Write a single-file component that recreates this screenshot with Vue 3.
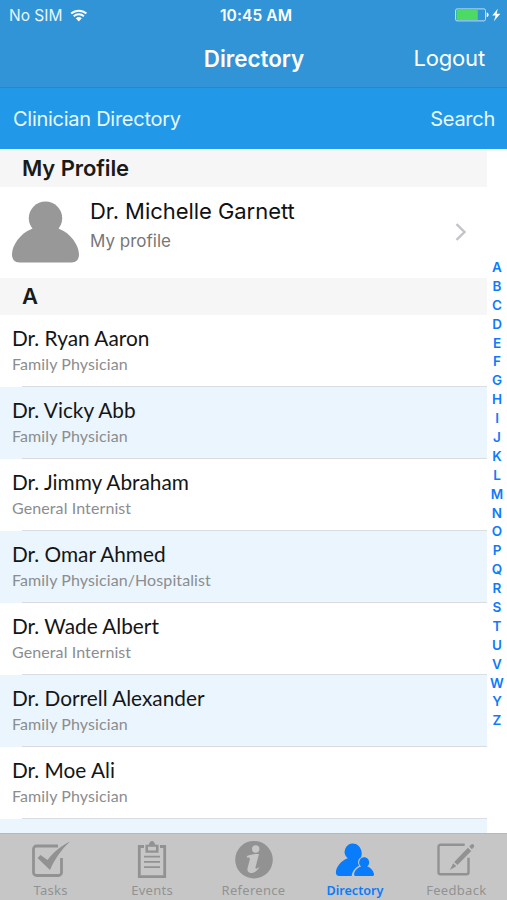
<template>
  <div class="phone">
    <header class="nav">
      <div class="status">
        <div class="carrier">
          <span>No SIM</span>
          <svg class="wifi" viewBox="0 0 18 13" width="18" height="13">
            <path d="M1.2 4.6a11.2 11.2 0 0 1 15.2 0" />
            <path d="M3.7 7.3a7.6 7.6 0 0 1 10.2 0" />
            <path class="solid" d="M8.8 12.4L5.8 9.3a4.4 4.4 0 0 1 6 0z" />
          </svg>
        </div>
        <span class="time">10:45 AM</span>
        <div class="battery">
          <svg viewBox="0 0 46 14" width="46" height="14">
            <rect class="shell" x="0.5" y="0.9" width="30" height="12" rx="1.6" />
            <rect class="charge" x="1.5" y="1.9" width="21.3" height="10" rx="0.5" />
            <path class="white" d="M31.7 4.6c2.6.6 2.6 4 0 4.6z" />
            <path class="white" d="M42.800 0.800L37.300 7.500h3.300L38.900 13.200l6.400-7.400h-3.700z" />
          </svg>
        </div>
      </div>
      <div class="title-row">
        <h1>Directory</h1>
        <a class="logout">Logout</a>
      </div>
    </header>

    <div class="sub-bar">
      <span class="sub-title">Clinician Directory</span>
      <span class="search">Search</span>
    </div>

    <main class="content">
      <div class="list">
        <h2 class="section">My Profile</h2>
        <div class="profile">
          <svg class="avatar" viewBox="0 0 67 62" width="67" height="62">
            <circle cx="33.5" cy="17.200" r="16.700" />
            <path
              d="M22 24c0 2-.5 3.200-2.500 4C8 32.500 0 44.500 0 53.500c0 5 2.800 8 7.500 8h52c4.700 0 7.500-3 7.500-8 0-9-8-21-19.500-25.500-2-.8-2.500-2-2.500-4z"
            />
          </svg>
          <div class="profile-text">
            <div class="profile-name">Dr. Michelle Garnett</div>
            <div class="profile-sub">My profile</div>
          </div>
          <svg class="chevron" viewBox="0 0 12 18" width="12" height="18">
            <path d="M1.500 1.200L9.500 9l-8 7.800" />
          </svg>
        </div>
        <h2 class="section letter">A</h2>
        <div v-for="doc in doctors" :key="doc.name" class="row">
          <div class="name">{{ doc.name }}</div>
          <div class="role">{{ doc.role }}</div>
        </div>
        <div class="row"></div>
      </div>
      <nav class="index">
        <span v-for="l in letters" :key="l">{{ l }}</span>
      </nav>
    </main>

    <footer class="tabs">
      <div v-for="tab in tabs" :key="tab.id" class="tab" :class="{ active: tab.id === current }">
        <svg viewBox="0 0 42 42" width="42" height="42">
          <g v-if="tab.id === 'tasks'">
            <path class="line" d="M28 6H6.500a3 3 0 0 0-3 3V32.500a3 3 0 0 0 3 3h22a3 3 0 0 0 3-3V18" />
            <path d="M7.500 18l3-3 7 5C24 12 30.500 6 40 1.500c-8 7.500-15.500 17.500-20 28.500z" />
          </g>
          <g v-else-if="tab.id === 'events'">
            <path class="line" d="M13 6.500H8.300v30.200h25.400V6.500H29" />
            <path fill-rule="evenodd" d="M14.500 4.700h3.200C18.500 2.500 19.500 1 21 1s2.500 1.500 3.300 3.700h3.200v8h-13zM17 6.700v3.700h8V6.700z" />
            <path class="thin" d="M13 16.700h16M13 21.900h16M13 27.200h16" />
          </g>
          <g v-else-if="tab.id === 'reference'">
            <circle cx="21" cy="19.700" r="18.800" />
            <circle class="hole" cx="22.700" cy="9" r="3.700" />
            <path class="hole" d="M14 16c3-1.500 7.700-2.300 12-2L22.500 27.200c-.5 2 1 2 4-.4-2 4.200-5.500 6.500-8.900 6.200-3-.3-3.600-2.500-3-5l2.200-8.500c.4-1.900-.8-2.200-3.100-2z" />
          </g>
          <g v-else-if="tab.id === 'directory'" transform="translate(-0.8 0)">
            <path d="M19.700 3.500a8.300 8.300 0 0 0-5.200 14.700C8 20.500 2.700 27 2.700 32.500c0 2.200 1.200 3.500 3.200 3.500h12.600c.5-4.500 3.300-8.300 7.400-10.200-2.300-4.500.1-7.300 1.600-8.200.9-1.500 1.400-3.500.7-6.500-.9-4.200-4.300-7.600-8.500-7.600z" />
            <path d="M31 17.300a5.100 5.100 0 0 0-3.100 9.100c-4.200 1.300-6.700 4.800-7 7.800-.1 1.200.5 1.800 1.700 1.800h16.500c1.200 0 1.800-.6 1.700-1.800-.3-3-2.800-6.500-6.800-7.800A5.100 5.100 0 0 0 31 17.300z" />
          </g>
          <g v-else transform="translate(-1.300 0.200)">
            <path class="line frame" d="M31 4.500H6.800A2 2 0 0 0 4.800 6.500V32a2 2 0 0 0 2 2h26a2 2 0 0 0 2-2V17.500" />
            <path d="M20.500 21.700L34.200 7.600l3.300 3.200-13.700 14.100zM19.500 23.100l3.100 3-6.400 3.700zM35.500 6.300l2.100-2.100q1.200-.8 2.400.3.900 1.100.2 2.400l-2 2.200z" />
          </g>
        </svg>
        <span>{{ tab.label }}</span>
      </div>
    </footer>
  </div>
</template>

<script setup>
import { ref } from "vue";

const current = ref("directory");

const doctors = [
  { name: "Dr. Ryan Aaron", role: "Family Physician" },
  { name: "Dr. Vicky Abb", role: "Family Physician" },
  { name: "Dr. Jimmy Abraham", role: "General Internist" },
  { name: "Dr. Omar Ahmed", role: "Family Physician/Hospitalist" },
  { name: "Dr. Wade Albert", role: "General Internist" },
  { name: "Dr. Dorrell Alexander", role: "Family Physician" },
  { name: "Dr. Moe Ali", role: "Family Physician" },
];

// no entries under X
const letters = "ABCDEFGHIJKLMNOPQRSTUVWYZ".split("");

const tabs = [
  { id: "tasks", label: "Tasks" },
  { id: "events", label: "Events" },
  { id: "reference", label: "Reference" },
  { id: "directory", label: "Directory" },
  { id: "feedback", label: "Feedback" },
];
</script>

<style>
body {
  margin: 0;
  overflow: hidden;
}
</style>

<style scoped>
.phone {
  display: flex;
  flex-direction: column;
  width: 100%;
  height: 100vh;
  overflow: hidden;
  background: #fff;
  font-family: Inter, "Liberation Sans", sans-serif;
}

h1,
h2 {
  margin: 0;
}

.nav {
  flex: none;
  box-sizing: border-box;
  height: 88px;
  color: #fff;
  background: #3194d6;
  border-bottom: 1px solid #2787c8;
}

.status,
.title-row {
  display: grid;
  grid-template-columns: 1fr auto 1fr;
  align-items: center;
}

.status {
  height: 30px;
  padding: 0 6px 0 9px;
  font-size: 15px;
}

.carrier {
  display: flex;
  align-items: center;
  gap: 8px;
  color: #e6f5ff;
  font-size: 15.5px;
}

.wifi path {
  fill: none;
  stroke: #fff;
  stroke-width: 2;
}

.wifi .solid {
  fill: #fff;
  stroke: none;
}

.time {
  padding-left: 2px;
  font-size: 15.5px;
  font-weight: 600;
  letter-spacing: 0.1px;
}

.battery {
  display: flex;
  justify-content: flex-end;
}

.shell {
  fill: none;
  stroke: #b9dff7;
}

.charge {
  fill: #4cd964;
}

.white {
  fill: #fff;
}

.title-row {
  height: 56px;
  padding: 0 22px;
}

h1 {
  grid-column: 2;
  padding-left: 1px;
  font-size: 22.4px;
  font-weight: 600;
}

.logout {
  justify-self: end;
  font-size: 22px;
  letter-spacing: -0.15px;
}

.sub-bar {
  display: flex;
  flex: none;
  align-items: center;
  justify-content: space-between;
  height: 61px;
  padding: 0 12px 0 13px;
  color: #e6f7ff;
  background: #2199e8;
  font-size: 20px;
  letter-spacing: -0.27px;
}

.content {
  display: flex;
  flex: 1;
  min-height: 0;
  overflow: hidden;
}

.list {
  flex: 1;
}

.section {
  box-sizing: border-box;
  height: 38px;
  padding-left: 22px;
  color: #1a1a1a;
  background: #f6f6f6;
  border-top: 1px solid #fff;
  font-size: 22px;
  font-weight: 600;
  letter-spacing: -0.1px;
  line-height: 37px;
}

.letter {
  line-height: 36px;
}

.profile {
  display: flex;
  height: 90px;
  padding: 0 20px 0 12px;
}

.avatar {
  margin-top: 14px;
  fill: #989898;
}

.profile-text {
  flex: 1;
  padding: 9px 0 0 11px;
}

.profile-name {
  color: #111;
  font-size: 22px;
  letter-spacing: -0.05px;
  line-height: 30px;
}

.profile-sub {
  color: #777;
  font-size: 17px;
  line-height: 31px;
}

.chevron {
  margin-top: 36px;
  fill: none;
  stroke: #c4c4c8;
  stroke-width: 2.4;
}

.row {
  position: relative;
  box-sizing: border-box;
  height: 72px;
  padding: 9px 0 0 12px;
  font-family: Lato, "Open Sans", sans-serif;
}

.row:nth-child(odd) {
  background: #eaf5fd;
}

.row::after {
  position: absolute;
  right: 0;
  bottom: 0;
  left: 22px;
  height: 1px;
  background: #d9dce1;
  content: "";
}

.name {
  color: #151515;
  font-size: 20.8px;
  line-height: 28px;
}

.role {
  color: #8b8d90;
  font-size: 16px;
  letter-spacing: 0.1px;
  line-height: 23px;
}

.index {
  width: 20px;
  padding-top: 109px;
  color: #0f7bfb;
  font-size: 13.5px;
  font-weight: 600;
  text-align: center;
}

.index span {
  display: block;
  height: 18.9px;
  line-height: 18.9px;
}

.tabs {
  display: flex;
  flex: none;
  box-sizing: border-box;
  height: 67px;
  background: #c6c6c6;
  border-top: 1px solid #b6babd;
}

.tab {
  display: flex;
  flex: 1;
  flex-direction: column;
  align-items: center;
  color: #929292;
  font-family: "Noto Sans", sans-serif;
  font-size: 13px;
  letter-spacing: 0.3px;
  line-height: 17px;
}

.tab svg {
  flex: none;
  margin-top: 6px;
  fill: currentColor;
}

.tab.active {
  color: #087cfb;
}

.tab.active span {
  font-size: 12.6px;
  font-weight: 600;
  letter-spacing: 0;
}

.line,
.thin {
  fill: none;
  stroke: currentColor;
  stroke-width: 2.8;
}

.frame {
  stroke-width: 2.4;
}

.thin {
  stroke-width: 1.8;
}

.hole {
  fill: #c6c6c6;
}
</style>
